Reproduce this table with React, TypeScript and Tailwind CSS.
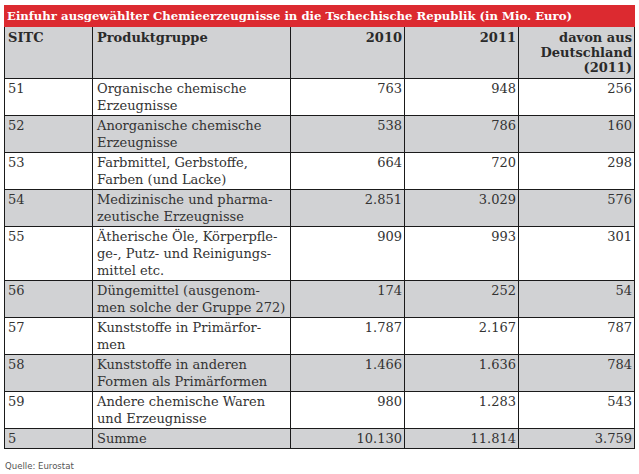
import React from "react";

const rows: [string, string[], string, string, string][] = [
  ["51", ["Organische chemische", "Erzeugnisse"], "763", "948", "256"],
  ["52", ["Anorganische chemische", "Erzeugnisse"], "538", "786", "160"],
  ["53", ["Farbmittel, Gerbstoffe,", "Farben (und Lacke)"], "664", "720", "298"],
  ["54", ["Medizinische und pharma-", "zeutische Erzeugnisse"], "2.851", "3.029", "576"],
  ["55", ["Ätherische Öle, Körperpfle-", "ge-, Putz- und Reinigungs-", "mittel etc."], "909", "993", "301"],
  ["56", ["Düngemittel (ausgenom-", "men solche der Gruppe 272)"], "174", "252", "54"],
  ["57", ["Kunststoffe in Primärfor-", "men"], "1.787", "2.167", "787"],
  ["58", ["Kunststoffe in anderen", "Formen als Primärformen"], "1.466", "1.636", "784"],
  ["59", ["Andere chemische Waren", "und Erzeugnisse"], "980", "1.283", "543"],
  ["5", ["Summe"], "10.130", "11.814", "3.759"],
];

export default function App() {
  return (
    <div className="w-[639px] h-[474px] bg-white pt-[5px] pl-[4px]" style={{ fontFamily: '"DejaVu Serif", serif' }}>
      <div className="w-[631px] h-[22px] bg-[#dc2a30] text-white font-bold text-[11.7px] leading-[22px] pl-[3px] whitespace-nowrap overflow-hidden">
        Einfuhr ausgewählter Chemieerzeugnisse in die Tschechische Republik (in Mio. Euro)
      </div>
      <table className="border-collapse text-[13px] leading-[17px] text-[#333]" style={{ tableLayout: "fixed", width: 630 }}>
        <colgroup>
          <col style={{ width: 88 }} />
          <col style={{ width: 198 }} />
          <col style={{ width: 114 }} />
          <col style={{ width: 114 }} />
          <col style={{ width: 116 }} />
        </colgroup>
        <thead>
          <tr className="bg-[#d1d2d4] h-[51px] font-bold text-[#2a2a2a] leading-[15px]">
            <th className="border-[1.5px] border-[#1a1a1a] border-t-0 align-top text-left px-[3px] pt-[3px]">SITC</th>
            <th className="border-[1.5px] border-[#1a1a1a] border-t-0 align-top text-left px-[4px] pt-[3px]">Produktgruppe</th>
            <th className="border-[1.5px] border-[#1a1a1a] border-t-0 align-top text-right px-[2px] pt-[3px]">2010</th>
            <th className="border-[1.5px] border-[#1a1a1a] border-t-0 align-top text-right px-[2px] pt-[3px]">2011</th>
            <th className="border-[1.5px] border-[#1a1a1a] border-t-0 align-top text-right px-[2px] pt-[3px]">
              davon aus<br />Deutschland<br />(2011)
            </th>
          </tr>
        </thead>
        <tbody>
          {rows.map((r, i) => (
            <tr key={r[0]} className={i % 2 === 1 ? "bg-[#d1d2d4]" : "bg-white"}>
              <td className="border-[1.5px] border-[#1a1a1a] align-top px-[3px] pt-[1px] pb-[1px]">{r[0]}</td>
              <td className="border-[1.5px] border-[#1a1a1a] align-top px-[4px] pt-[1px] pb-[1px] whitespace-nowrap">
                {r[1].map((l, j) => (
                  <div key={j}>{l}</div>
                ))}
              </td>
              <td className="border-[1.5px] border-[#1a1a1a] align-top text-right px-[2px] pt-[1px]">{r[2]}</td>
              <td className="border-[1.5px] border-[#1a1a1a] align-top text-right px-[2px] pt-[1px]">{r[3]}</td>
              <td className="border-[1.5px] border-[#1a1a1a] align-top text-right px-[2px] pt-[1px]">{r[4]}</td>
            </tr>
          ))}
        </tbody>
      </table>
      <div className="mt-[11px] ml-[1px] text-[9.5px] leading-[12px] text-[#555]" style={{ fontFamily: '"DejaVu Sans Condensed", "DejaVu Sans", sans-serif' }}>
        Quelle: Eurostat
      </div>
    </div>
  );
}
